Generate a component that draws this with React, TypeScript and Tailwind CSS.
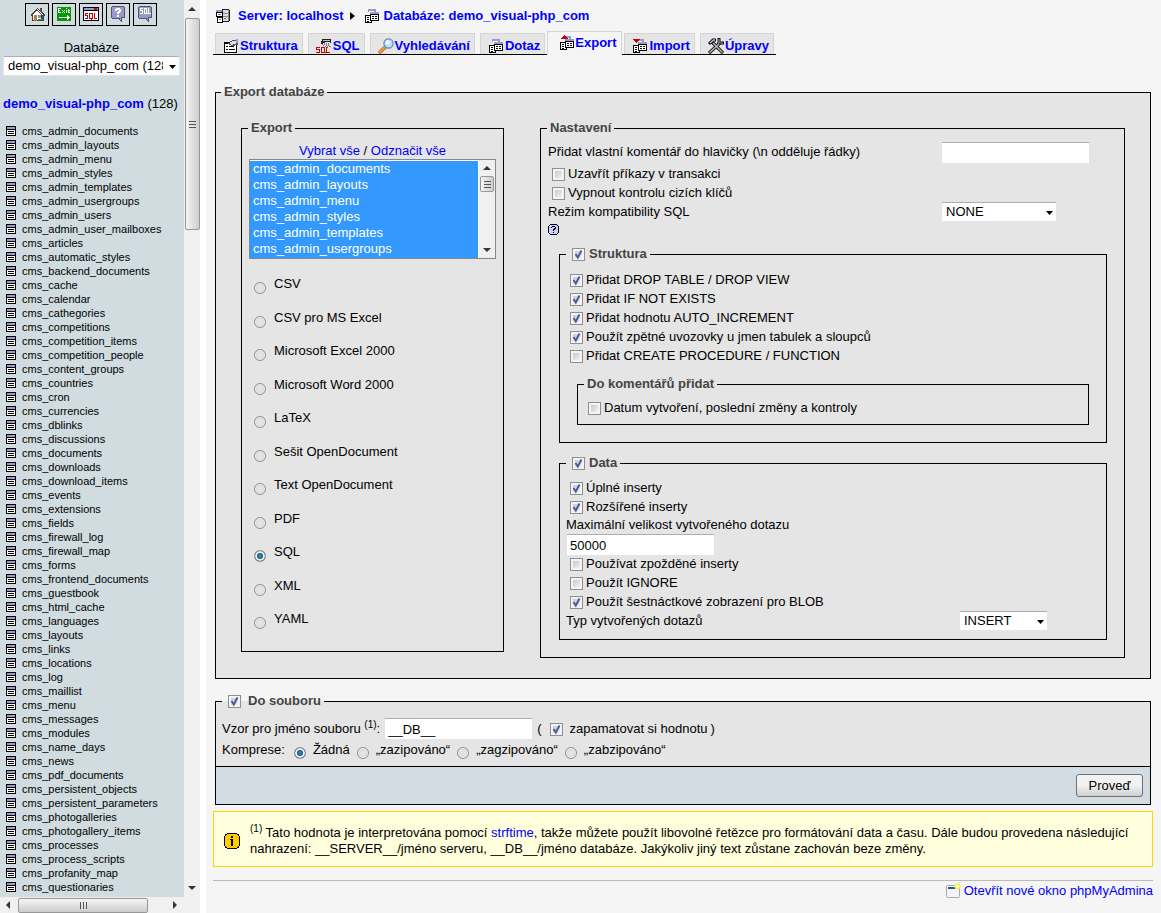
import type { ReactNode } from "react";

const tables = [
  "cms_admin_documents", "cms_admin_layouts", "cms_admin_menu", "cms_admin_styles",
  "cms_admin_templates", "cms_admin_usergroups", "cms_admin_users", "cms_admin_user_mailboxes",
  "cms_articles", "cms_automatic_styles", "cms_backend_documents", "cms_cache", "cms_calendar",
  "cms_cathegories", "cms_competitions", "cms_competition_items", "cms_competition_people",
  "cms_content_groups", "cms_countries", "cms_cron", "cms_currencies", "cms_dblinks",
  "cms_discussions", "cms_documents", "cms_downloads", "cms_download_items", "cms_events",
  "cms_extensions", "cms_fields", "cms_firewall_log", "cms_firewall_map", "cms_forms",
  "cms_frontend_documents", "cms_guestbook", "cms_html_cache", "cms_languages", "cms_layouts",
  "cms_links", "cms_locations", "cms_log", "cms_maillist", "cms_menu", "cms_messages",
  "cms_modules", "cms_name_days", "cms_news", "cms_pdf_documents", "cms_persistent_objects",
  "cms_persistent_parameters", "cms_photogalleries", "cms_photogallery_items", "cms_processes",
  "cms_process_scripts", "cms_profanity_map", "cms_questionaries",
];

const formats = [
  "CSV", "CSV pro MS Excel", "Microsoft Excel 2000", "Microsoft Word 2000", "LaTeX",
  "Sešit OpenDocument", "Text OpenDocument", "PDF", "SQL", "XML", "YAML",
];

/* ---------- icons ---------- */

const Icon = ({ children }: { children: ReactNode }) => (
  <svg viewBox="0 0 16 16" className="size-4 shrink-0" shapeRendering="crispEdges" aria-hidden="true">
    {children}
  </svg>
);

const TableIcon = () => (
  <svg viewBox="0 0 10 10" className="size-[10px] shrink-0" shapeRendering="crispEdges" aria-hidden="true">
    <path fill="#000" d="M0 0h10v10H0z" />
    <path fill="#99c" d="M1 1h8v2H1z" />
    <path fill="#fff" d="M1 4h8v5H1z" />
    <path fill="#000" d="M2 5h6v1H2zM2 7h6v1H2z" />
  </svg>
);

const HomeIcon = () => (
  <Icon>
    <path fill="#444" d="M2 8h1V7h1V6h1V5h1V4h1V3h1V2h1v1h1v1h1V2h2v4h1v1h1v1h1v2h-1v5H3v-5H2z" />
    <path fill="#fff" d="M4 8h1V7h1V6h1V5h2v1h1v1h1v1h1v6H4z" />
    <path fill="#c33" d="M11 3h1v3h-1z" />
    <path fill="#fff" d="M8 3h1v1h1v1h1v1h1v1h1v1h1v1h-1V8h-1V7h-1V6h-1V5H9V4H8z" />
    <path fill="#b77a3c" d="M5 9h3v6H5z" />
    <path fill="#69c" d="M9 9h3v3H9z" />
    <path fill="#484" d="M9 13h5v1H9z" />
  </Icon>
);

const ExitIcon = () => (
  <Icon>
    <path fill="#090" d="M1 1h14v14H1z" />
    <path fill="#fff" d="M2 2h3v1H3v1h1v1H3v1h2v1H2zM6 4h1v1h1V4h1v1H8v1h1v1H8V6H7v1H6V6h1V5H6zM10 4h1v3h-1zM10 2h1v1h-1zM12 3h1v1h1v1h-1v1h1v1h-2zM3 11h8V9h1v1h1v1h1v1h-1v1h-1v1h-1v-2H3z" />
  </Icon>
);

const SqlWindowIcon = () => (
  <Icon>
    <path fill="#000" d="M0 1h16v14H0z" />
    <path fill="#fff" d="M1 5h14v9H1z" />
    <path fill="#99c" d="M1 2h14v2H1z" />
    <path fill="#c00" d="M11 2h3v2h-3zM2 7h3v1H3v1h2v4H2v-1h2v-2H2zM6 7h4v6H9v1H8v-1H6zM11 7h1v5h2v1h-3z" />
    <path fill="#fff" d="M7 8h2v4H7z" />
  </Icon>
);

const HelpBubbleIcon = () => (
  <Icon>
    <path fill="#556" d="M2 0h12v1h1v11h-3v4h-1v-1h-1v-1H9v-1H2v-1H1V1h1z" />
    <path fill="#99c" d="M2 1h12v10h-3v3h-1v-2H2z" />
    <path fill="#fff" d="M6 2h4v1h1v3h-1v1H9v1H7V6h1V5h1V4H7v1H5V3h1zM7 9h2v2H7z" />
  </Icon>
);

const SqlBubbleIcon = () => (
  <Icon>
    <path fill="#556" d="M2 0h12v1h1v11h-3v4h-1v-1h-1v-1H9v-1H2v-1H1V1h1z" />
    <path fill="#99c" d="M2 1h12v10h-3v3h-1v-2H2z" />
    <path fill="#fff" d="M3 2h3v1H4v1h2v4H3V7h2V5H3zM7 2h3v5h1v1H7zM11 2h1v5h2v1h-3z" />
    <path fill="#99c" d="M8 3h1v4H8z" />
  </Icon>
);

const ServerIcon = () => (
  <Icon>
    <path fill="#222" d="M7 1h7v1h1v11h-1v1H8v-1H7z" />
    <path fill="#ddd" d="M8 2h5v11H8z" />
    <path fill="#888" d="M13 2h1v11h-1zM8 5h5v1H8zM8 8h5v1H8z" />
    <path fill="#c33" d="M9 10h2v1H9z" />
    <path fill="#99c" d="M1 2h6v2H1z" />
    <path fill="#000" d="M1 4h7v5H1zM2 9h6v6H2z" />
    <path fill="#fff" d="M2 5h5v3H2zM3 10h4v4H3z" />
    <path fill="#777" d="M3 6h3v1H3zM4 11h2v1H4z" />
  </Icon>
);

const DbShapes = () => (
  <>
    <path fill="#99c" d="M4 1h8v3H4z" />
    <path fill="#fff" d="M5 3h5v2H5z" />
    <path fill="#000" d="M1 7h5v1H2v6h5v-1h1v2H1z" />
    <path fill="#fff" d="M2 8h5v6H2z" />
    <path fill="#000" d="M3 9h2v1H3zM3 11h2v1H3zM3 13h2v1H3z" />
    <path fill="#99c" d="M6 4h9v2H6z" />
    <path fill="#000" d="M6 6h9v7H6z" />
    <path fill="#fff" d="M7 7h7v5H7z" />
    <path fill="#000" d="M8 8h2v1H8zM11 8h2v1h-2zM8 10h2v1H8zM11 10h2v1h-2z" />
  </>
);

const DbIcon = () => (
  <Icon>
    <DbShapes />
  </Icon>
);

const ExportIcon = () => (
  <Icon>
    <DbShapes />
    <path fill="#c00" d="M5 0h1v1h1v1h1v1h1v1H2V3h1V2h1V1h1z" />
  </Icon>
);

const ImportIcon = () => (
  <Icon>
    <DbShapes />
    <path fill="#c00" d="M1 1h7v1H7v1H6v1H5v1H4V4H3V3H2V2H1z" />
  </Icon>
);

const StructureIcon = () => (
  <Icon>
    <path fill="#000" d="M1 4h13v11H1z" />
    <path fill="#fff" d="M2 6h11v8H2z" />
    <path fill="#000" d="M3 8h2v1H3zM6 8h5v1H6zM3 11h2v1H3zM6 11h6v1H6z" />
    <path fill="#555" d="M5 5h2V3h2V2h6v5h-3v1H8V7H6z" />
    <path fill="#dde" d="M7 4h2V3h4v3h-3v1H8V6H7z" />
    <path fill="#99c" d="M13 1h2v4h-2z" />
  </Icon>
);

const SqlIcon = () => (
  <Icon>
    <path fill="#222" d="M6 1h9v4h-1V4H9v1H7v1H5V3h1z" />
    <path fill="#bbc" d="M7 2h7v1H7z" />
    <path fill="#778" d="M6 6h1v1H6zM8 5h1v2H8zM10 5h1v3h-1zM12 5h1v3h-1zM7 7h1v1H7zM9 8h1v1H9zM11 8h1v2h-1zM13 8h2v1h-2z" />
    <path fill="#c00" d="M0 9h4v1H1v1h3v4H0v-1h3v-2H0zM5 9h4v5h1v1H5zM10 9h1v5h3v1h-4z" />
    <path fill="#e5e5e5" d="M6 10h2v4H6z" />
  </Icon>
);

const SearchIcon = () => (
  <svg viewBox="0 0 16 16" className="size-4 shrink-0" aria-hidden="true">
    <path stroke="#b5651d" strokeWidth="3.4" d="M1 15.2l6-6" />
    <path stroke="#f93" strokeWidth="2" d="M1 15l6-6" />
    <circle cx="10.5" cy="5.5" r="4.6" fill="#bdf" stroke="#68a" strokeWidth="1.2" />
    <circle cx="9.5" cy="4.5" r="2.2" fill="#e8f8ff" />
  </svg>
);

const ToolsIcon = () => (
  <svg viewBox="0 0 16 16" className="size-4 shrink-0" fill="none" aria-hidden="true">
    <path stroke="#111" strokeWidth="3.2" d="M4 4l11 11M12 5L1 15" />
    <path stroke="#111" strokeWidth="3" d="M1 6l4-4h3M11 0v5h5" />
    <path stroke="#bbc" strokeWidth="1.4" d="M5 5l9.5 9.500M11 6l-9.500 8.500M2 5l3.500-3H7" />
    <path stroke="#99a" strokeWidth="1.2" d="M11 1v4h4" />
  </svg>
);

const InfoIcon = () => (
  <Icon>
    <path fill="#000" d="M3 0h10v1h2v2h1v10h-1v2h-2v1H3v-1H1v-2H0V3h1V1h2z" />
    <path fill="#fc0" d="M3 1h10v1h1v1h1v10h-1v1h-1v1H3v-1H2v-1H1V3h1V2h1z" />
    <path fill="#000" d="M7 3h2v2H7zM6 6h3v7H7V7H6z" />
  </Icon>
);

const HelpIcon = () => (
  <svg viewBox="0 0 11 11" className="size-[11px]" shapeRendering="crispEdges" aria-hidden="true">
    <path fill="#000" d="M2 0h7v1h1v1h1v7h-1v1H9v1H2v-1H1V9H0V2h1V1h1z" />
    <path fill="#ccf" d="M2 1h7v1h1v7H9v1H2V9H1V2h1z" />
    <path fill="#000" d="M4 2h3v1h1v2H7v1H6v1H5V5h1V4h1V3H4v1H3V3h1zM5 8h1v1H5z" />
  </svg>
);

const NewWindowIcon = () => (
  <svg viewBox="0 0 16 16" className="size-4 shrink-0" aria-hidden="true">
    <rect x="1.5" y="2.5" width="13" height="12" rx="1" fill="#f4f4f4" stroke="#aaa" />
    <path fill="#25a" d="M3 4h8v2H3z" />
    <circle cx="12.5" cy="3.500" r="3" fill="#fe4" />
    <circle cx="12.5" cy="3.500" r="1.3" fill="#fff" />
  </svg>
);

const Arrow = ({ d }: { d: string }) => (
  <svg viewBox="0 0 8 8" className="size-2 shrink-0" aria-hidden="true">
    <path fill="#333" d={d} />
  </svg>
);

const UP = "M4 2l4 4H0z";
const DOWN = "M0 2h8L4 6z";
const LEFT = "M2 4l4-4v8z";
const RIGHT = "M6 4L2 0v8z";

/* ---------- form pieces ---------- */

const Checkbox = ({ id, checked }: { id: string; checked?: boolean }) => (
  <span className="relative inline-block size-[13px] shrink-0">
    <input
      id={id}
      type="checkbox"
      defaultChecked={checked}
      className="peer block size-[13px] appearance-none border border-[#8e8f8f] bg-linear-to-br from-[#b8bcc4] to-white shadow-[inset_0_0_0_2px_#f4f4f4]"
    />
    <svg
      viewBox="0 0 13 13"
      className="pointer-events-none absolute inset-0 hidden size-[13px] peer-checked:block"
      aria-hidden="true"
    >
      <path fill="none" stroke="#4a5f97" strokeWidth="2" d="M3.5 6l2.3 3.5L9.5 2.5" />
    </svg>
  </span>
);

const Radio = ({ id, name, checked }: { id: string; name: string; checked?: boolean }) => (
  <input
    id={id}
    name={name}
    type="radio"
    defaultChecked={checked}
    className="size-3 shrink-0 appearance-none rounded-full border border-[#8e8f8f] bg-radial from-[#e4e4e4] from-30% to-[#c4c7ca] shadow-[inset_0_0_0_1px_#f4f4f4] checked:bg-radial checked:from-[#2a8fc0] checked:from-10% checked:to-[#0b2f4a] checked:to-60% checked:shadow-[inset_0_0_0_2px_#f0f0f0]"
  />
);

const CheckRow = ({ id, label, checked }: { id: string; label: string; checked?: boolean }) => (
  <div className="flex h-[19px] items-center gap-[3px] pl-1">
    <span className="flex pt-[2px]">
      <Checkbox id={id} checked={checked} />
    </span>
    <label htmlFor={id}>{label}</label>
  </div>
);

const Select = ({ id, label, children, className }: { id: string; label?: string; children: ReactNode; className: string }) => (
  <span className={`relative inline-block ${className}`}>
    <select
      id={id}
      aria-label={label}
      className="block h-5 w-full appearance-none rounded-xs border border-[#e3e3eb] border-t-[#abadb3] bg-white pr-4 pl-1 leading-4"
    >
      {children}
    </select>
    <svg viewBox="0 0 7 4" className="pointer-events-none absolute top-[9px] right-1 h-1 w-[7px]" aria-hidden="true">
      <path d="M0 0h7L3.5 4z" />
    </svg>
  </span>
);

const inputStyle =
  "h-[22px] w-[149px] rounded-xs border border-[#e3e3eb] border-t-[#abadb3] bg-white px-[3px]";

const Legend = ({ children }: { children: ReactNode }) => (
  <legend className="flex h-4 items-center px-[3px] font-bold text-[#444]">{children}</legend>
);

const CheckLegend = ({ id, label }: { id: string; label: string }) => (
  <Legend>
    <span className="flex items-center gap-1 pl-[3px]">
      <Checkbox id={id} checked />
      <label htmlFor={id}>{label}</label>
    </span>
  </Legend>
);

/* ---------- navigation frame ---------- */

const navIcons = [
  { title: "Domů", icon: <HomeIcon /> },
  { title: "Odhlásit se", icon: <ExitIcon /> },
  { title: "Okno dotazu", icon: <SqlWindowIcon /> },
  { title: "Dokumentace phpMyAdmina", icon: <HelpBubbleIcon /> },
  { title: "Dokumentace MySQL", icon: <SqlBubbleIcon /> },
];

const Sidebar = () => (
  <aside className="grid w-[200px] shrink-0 grid-cols-[184px_16px] grid-rows-[1fr_16px] bg-[#f0f0f0]">
    <nav className="overflow-hidden bg-[#d0dce0]">
      <div className="flex gap-[3px] pt-[3px] pl-[25px]">
        {navIcons.map((n) => (
          <a key={n.title} href="#" title={n.title} className="flex h-[23px] w-6 justify-center border border-black pt-[2px]">
            {n.icon}
          </a>
        ))}
      </div>
      <div className="flex flex-col pt-[14px] pl-[3px]">
        <label htmlFor="lightm_db" className="pr-1 text-center leading-4">
          Databáze
        </label>
        <Select id="lightm_db" className="w-[177px]">
          <option>demo_visual-php_com (128)</option>
        </Select>
      </div>
      <p className="pt-5 pl-[3px] leading-4 whitespace-nowrap">
        <a href="#" className="font-bold text-[#00f]">
          demo_visual-php_com
        </a>{" "}
        (128)
      </p>
      <ul className="pt-3 text-[11px] leading-[14px]">
        {tables.map((t) => (
          <li key={t}>
            <a href="#" className="flex items-center gap-[6px] pl-[6px]">
              <TableIcon />
              {t}
            </a>
          </li>
        ))}
      </ul>
    </nav>
    <div className="flex flex-col items-center pt-[5px] pb-[5px]">
      <Arrow d={UP} />
      <div className="mt-[5px] flex h-[212px] w-[15px] flex-col items-center justify-center gap-[2px] rounded-xs border border-[#979797] bg-linear-to-r from-[#f5f5f5] to-[#cdcdcd]">
        <span className="h-px w-[7px] bg-[#555]" />
        <span className="h-px w-[7px] bg-[#555]" />
        <span className="h-px w-[7px] bg-[#555]" />
      </div>
      <div className="grow" />
      <Arrow d={DOWN} />
    </div>
    <div className="flex items-center pr-[5px] pl-1">
      <Arrow d={LEFT} />
      <div className="ml-[6px] flex h-[15px] w-[130px] items-center justify-center gap-[2px] rounded-xs border border-[#979797] bg-linear-to-b from-[#f5f5f5] to-[#cdcdcd]">
        <span className="h-[7px] w-px bg-[#555]" />
        <span className="h-[7px] w-px bg-[#555]" />
        <span className="h-[7px] w-px bg-[#555]" />
      </div>
      <div className="grow" />
      <Arrow d={RIGHT} />
    </div>
  </aside>
);

/* ---------- header ---------- */

const Tab = ({ icon, label, active }: { icon: ReactNode; label: string; active?: boolean }) => (
  <li className={active ? "-mx-[3px] -mb-px" : ""}>
    <a
      href="#"
      className={
        active
          ? "flex h-6 items-center border border-b-0 border-[#d5d5d5] bg-[#f5f5f5] pr-[5px] pb-px pl-[11px]"
          : "flex h-[21px] items-end gap-px border border-b-0 border-[#d5d5d5] bg-[#e5e5e5] pr-1 pl-[7px]"
      }
    >
      {icon}
      <span className="leading-4">{label}</span>
    </a>
  </li>
);

const Header = () => (
  <header className="font-bold text-[#00f]">
    <div className="flex items-center pt-2 pl-[2px] leading-4">
      <ServerIcon />
      <a href="#" className="ml-[7px]">
        Server: localhost
      </a>
      <svg viewBox="0 0 5 8" className="mx-[6px] h-2 w-[5px]" aria-hidden="true">
        <path d="M0 0l5 4-5 4z" />
      </svg>
      <span className="ml-[3px] flex items-center gap-1">
        <DbIcon />
        <a href="#">Databáze: demo_visual-php_com</a>
      </span>
    </div>
    <ul className="mt-[7px] flex w-max items-end gap-[5px] border-b border-black px-[2px]">
      <Tab icon={<StructureIcon />} label="Struktura" />
      <Tab icon={<SqlIcon />} label="SQL" />
      <Tab icon={<SearchIcon />} label="Vyhledávání" />
      <Tab icon={<DbIcon />} label="Dotaz" />
      <Tab icon={<ExportIcon />} label="Export" active />
      <Tab icon={<ImportIcon />} label="Import" />
      <Tab icon={<ToolsIcon />} label="Úpravy" />
    </ul>
  </header>
);

/* ---------- export form ---------- */

const ExportFormat = () => (
  <fieldset className="w-[263px] shrink-0 self-start border border-black px-[6px] pb-[21px]">
    <Legend>Export</Legend>
    <p className="pt-[7px] text-center leading-4">
      <a href="#" className="text-[#00f]">
        Vybrat vše
      </a>{" "}
      /{" "}
      <a href="#" className="text-[#00f]">
        Odznačit vše
      </a>
    </p>
    <div className="mx-px flex h-[100px] border border-[#828790] bg-white">
      <select
        multiple
        size={6}
        aria-label="Tabulky"
        defaultValue={tables}
        className="mt-px h-[97px] grow overflow-y-scroll bg-[#39f] [scrollbar-width:none]"
      >
        {tables.map((t) => (
          <option
            key={t}
            value={t}
            className="h-4 min-h-4 bg-linear-to-r from-[#39f] to-[#39f] px-[3px] py-0 leading-4 [-webkit-text-fill-color:#fff]"
          >
            {t}
          </option>
        ))}
      </select>
      <div className="ml-px flex w-4 flex-col items-center bg-[#f0f0f0] py-1">
        <Arrow d={UP} />
        <div className="mt-1 flex h-4 w-[14px] flex-col items-center justify-center gap-[2px] rounded-xs border border-[#979797] bg-linear-to-r from-[#f5f5f5] to-[#cdcdcd]">
          <span className="h-px w-[7px] bg-[#555]" />
          <span className="h-px w-[7px] bg-[#555]" />
          <span className="h-px w-[7px] bg-[#555]" />
        </div>
        <div className="grow" />
        <Arrow d={DOWN} />
      </div>
    </div>
    <ul className="mt-[17px] flex h-[354px] flex-col justify-between">
      {formats.map((f) => (
        <li key={f} className="flex h-[19px] gap-2 pl-[6px]">
          <span className="flex items-end pb-px">
            <Radio id={`fmt-${f}`} name="what" checked={f === "SQL"} />
          </span>
          <label htmlFor={`fmt-${f}`} className="leading-4">
            {f}
          </label>
        </li>
      ))}
    </ul>
  </fieldset>
);

const StructureOptions = () => (
  <fieldset className="mt-[9px] border border-black px-[6px] pb-[17px]">
    <CheckLegend id="sql_structure" label="Struktura" />
    <div className="pt-2">
      <CheckRow id="drop" label="Přidat DROP TABLE / DROP VIEW" checked />
      <CheckRow id="if_not_exists" label="Přidat IF NOT EXISTS" checked />
      <CheckRow id="auto_increment" label="Přidat hodnotu AUTO_INCREMENT" checked />
      <CheckRow id="backquotes" label="Použít zpětné uvozovky u jmen tabulek a sloupců" checked />
      <CheckRow id="procedures" label="Přidat CREATE PROCEDURE / FUNCTION" />
    </div>
    <fieldset className="mx-[11px] mt-[11px] border border-black px-[6px] pb-[7px]">
      <Legend>Do komentářů přidat</Legend>
      <div className="pt-[6px]">
        <CheckRow id="dates" label="Datum vytvoření, poslední změny a kontroly" />
      </div>
    </fieldset>
  </fieldset>
);

const DataOptions = () => (
  <fieldset className="mt-3 border border-black px-[6px] pb-[9px]">
    <CheckLegend id="sql_data" label="Data" />
    <div className="pt-[7px]">
      <CheckRow id="columns" label="Úplné inserty" checked />
      <CheckRow id="extended" label="Rozšířené inserty" checked />
      <div className="h-[38px]">
        <label htmlFor="max_query_size" className="block leading-[18px]">
          Maximální velikost vytvořeného dotazu
        </label>
        <input id="max_query_size" type="text" defaultValue="50000" className={`block ${inputStyle}`} />
      </div>
      <CheckRow id="delayed" label="Používat zpožděné inserty" />
      <CheckRow id="ignore" label="Použít IGNORE" />
      <CheckRow id="hexforbinary" label="Použít šestnáctkové zobrazení pro BLOB" checked />
      <div className="flex h-[19px]">
        <label htmlFor="sql_type" className="grow leading-[19px]">
          Typ vytvořených dotazů
        </label>
        <div className="w-[141px]">
          <Select id="sql_type" className="w-[89px]">
            <option>INSERT</option>
            <option>UPDATE</option>
            <option>REPLACE</option>
          </Select>
        </div>
      </div>
    </div>
  </fieldset>
);

const Settings = () => (
  <fieldset className="min-w-0 grow border border-black pr-[17px] pb-[17px] pl-[7px]">
    <legend className="-ml-px flex h-4 items-center px-[3px] font-bold text-[#444]">Nastavení</legend>
    <div className="flex h-[28px] items-start pt-[6px]">
      <label htmlFor="header_comment" className="grow leading-[19px]">
        Přidat vlastní komentář do hlavičky (\n odděluje řádky)
      </label>
      <div className="w-[166px]">
        <input id="header_comment" type="text" className={`block ${inputStyle}`} />
      </div>
    </div>
    <CheckRow id="use_transaction" label="Uzavřít příkazy v transakci" />
    <CheckRow id="disable_fk" label="Vypnout kontrolu cizích klíčů" />
    <div className="flex h-[19px]">
      <label htmlFor="sql_compat" className="grow leading-[19px]">
        Režim kompatibility SQL
      </label>
      <div className="w-[166px]">
        <Select id="sql_compat" className="w-[116px]">
          <option>NONE</option>
          <option>ANSI</option>
          <option>DB2</option>
        </Select>
      </div>
    </div>
    <a href="#" title="Dokumentace" className="flex h-4 w-4 items-center">
      <HelpIcon />
    </a>
    <div className="pl-[11px]">
      <StructureOptions />
      <DataOptions />
    </div>
  </fieldset>
);

const compressions = ["Žádná", "„zazipováno“", "„zagzipováno“", "„zabzipováno“"];

const SaveAs = () => (
  <div className="mt-[14px]">
    <fieldset className="border border-black bg-[#e5e5e5] px-[6px] pb-[7px]">
      <legend className="flex h-4 items-center gap-[7px] pr-[3px] pl-[6px] font-bold text-[#444]">
        <Checkbox id="asfile" checked />
        <label htmlFor="asfile">Do souboru</label>
      </legend>
      <div className="flex h-8 items-center pt-2">
        <label htmlFor="filename_template" className="mr-1 whitespace-nowrap">
          Vzor pro jméno souboru <sup className="text-[10px]">(1)</sup>:
        </label>
        <input id="filename_template" type="text" defaultValue="__DB__" className={inputStyle} />
        <span className="mr-2 ml-1">(</span>
        <Checkbox id="remember" checked />
        <label htmlFor="remember" className="mr-[3px] ml-[7px]">
          zapamatovat si hodnotu
        </label>
        )
      </div>
      <div className="flex h-[18px] leading-[18px]">
        <span className="mr-[9px]">Komprese:</span>
        {compressions.map((c, i) => (
          <span key={c} className="mr-[7px] flex">
            <span className="mr-[7px] flex items-end">
              <Radio id={`compression-${i}`} name="compression" checked={i === 0} />
            </span>
            <label htmlFor={`compression-${i}`}>{c}</label>
          </span>
        ))}
      </div>
    </fieldset>
    <div className="flex justify-end border border-t-0 border-black bg-[#d3dce3] px-[7px] py-[7px]">
      <button
        type="submit"
        className="h-[23px] w-[67px] rounded-[3px] border border-[#707070] bg-linear-to-b from-[#f2f2f2] from-50% to-[#cfcfcf] leading-4"
      >
        Proveď
      </button>
    </div>
  </div>
);

export default function App() {
  return (
    <div className="flex min-h-screen bg-[#f5f5f5] font-['Liberation_Sans',Arial,sans-serif] text-[13px] text-black">
      <Sidebar />
      <div className="w-[6px] shrink-0 bg-white" />
      <main className="min-w-0 grow pr-2 pl-[7px]">
        <Header />
        <form className="mx-[2px] mt-[29px]" onSubmit={(e) => e.preventDefault()}>
          <fieldset className="border border-black bg-[#e5e5e5] pr-[25px] pb-[20px] pl-[5px]">
            <Legend>Export databáze</Legend>
            <div className="flex gap-9 pt-5 pl-5">
              <ExportFormat />
              <Settings />
            </div>
          </fieldset>
          <SaveAs />
        </form>
        <div className="mt-[6px] flex items-center gap-[10px] border border-[gold] bg-[#ffd] pt-[13px] pr-5 pb-[9px] pl-[10px]">
          <InfoIcon />
          <p className="leading-4">
            <sup className="text-[10px]">(1)</sup> Tato hodnota je interpretována pomocí{" "}
            <a href="#" className="text-[#00f]">
              strftime
            </a>
            , takže můžete použít libovolné řetězce pro formátování data a času. Dále budou provedena následující
            nahrazení: __SERVER__/jméno serveru, __DB__/jméno databáze. Jakýkoliv jiný text zůstane zachován beze změny.
          </p>
        </div>
        <div className="mt-[13px] flex justify-end border-t border-[#bbb] pt-[2px]">
          <a href="#" className="flex items-center gap-[3px] leading-4 text-[#00f]">
            <NewWindowIcon />
            Otevřít nové okno phpMyAdmina
          </a>
        </div>
      </main>
    </div>
  );
}
